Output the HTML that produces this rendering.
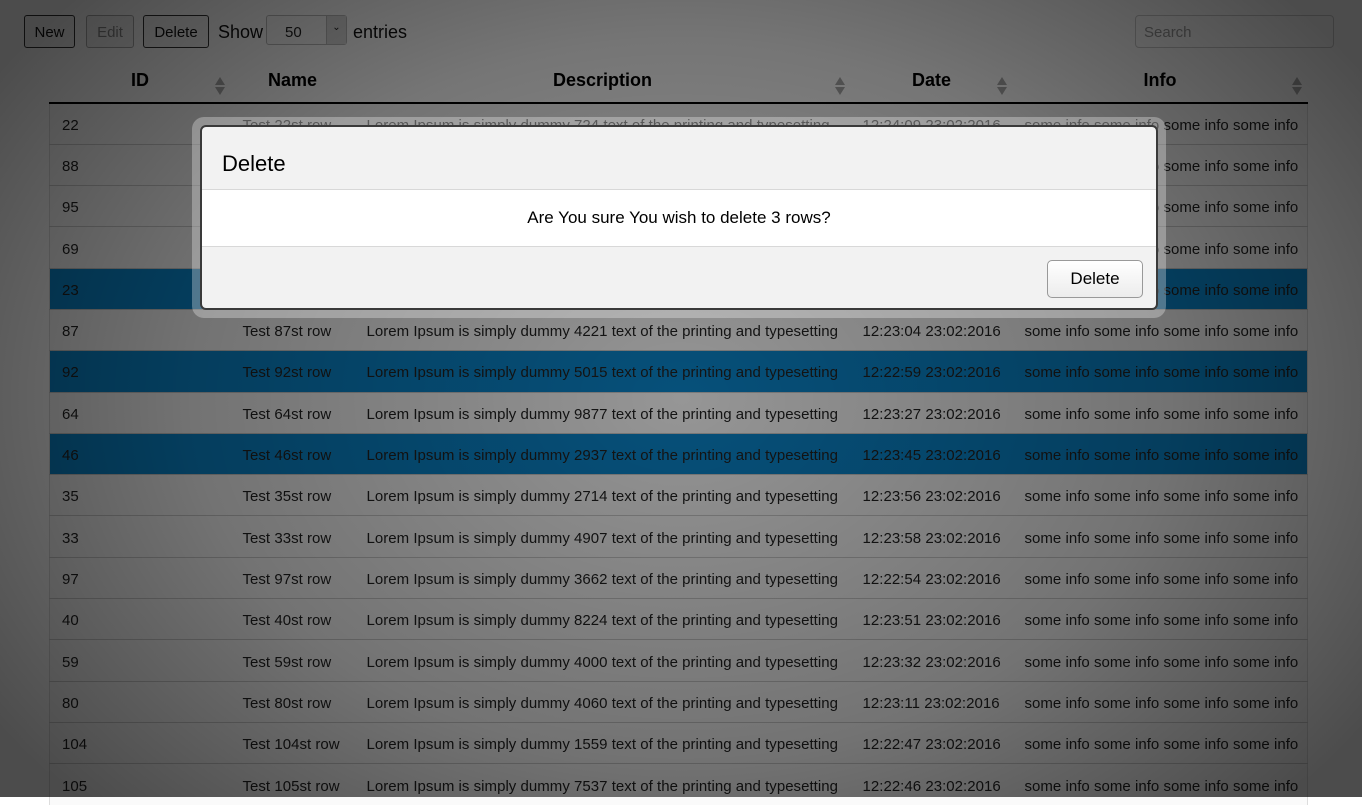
<!DOCTYPE html>
<html><head><meta charset="utf-8"><style>
*{box-sizing:border-box;margin:0;padding:0}
body{width:1362px;height:797px;overflow:hidden;background:#fff;font-family:"Liberation Sans",sans-serif;color:#222;position:relative}
.btn{position:absolute;top:15px;height:33px;border:1px solid #333;border-radius:3px;background:#f4f4f4;font-size:15px;line-height:33px;text-align:center;color:#111}
.lbl{position:absolute;top:22px;font-size:18px;color:#111}
table{position:absolute;left:49px;top:60px;width:1258px;border-collapse:collapse;font-size:15px;table-layout:fixed}
th{height:43px;font-size:18px;font-weight:bold;color:#000;text-align:center;position:relative;border-bottom:2px solid #000;vertical-align:middle;padding-bottom:2px}
th .s{position:absolute;right:6px;top:17px;width:10px;height:19px}
th .s:before{content:"";position:absolute;left:0;top:0;border:5px solid transparent;border-bottom:8px solid #aaa;border-top:0}
th .s:after{content:"";position:absolute;left:0;top:10px;border:5px solid transparent;border-top:8px solid #aaa;border-bottom:0}
td{height:41.3px;padding:3px 0 0 12px;border-top:1px solid #ccc;white-space:nowrap;overflow:visible;color:#222;letter-spacing:.03px}
tbody tr{background:#fafafa}
tbody tr.sel{background:#0a86cc}
table tbody{border-left:1px solid #ddd;border-right:1px solid #ddd}
.ov{position:absolute;left:0;top:0;width:1362px;height:797px;background:radial-gradient(ellipse 60% 75% at 50% 50%,rgba(0,0,0,.4),rgba(0,0,0,.54) 60%,rgba(0,0,0,.7))}
.glow{position:absolute;left:192px;top:117px;width:974px;height:201px;border-radius:12px;background:rgba(255,255,255,.3)}
.dlg{position:absolute;left:200px;top:125px;width:958px;height:185px;border:2px solid #3a3a3a;border-radius:6px;background:#f2f2f2;overflow:hidden}
.hd{height:63px;border-bottom:1px solid #d8d8d8;font-size:22px;padding:24px 0 0 20px;color:#000}
.bd{height:57px;background:#fff;border-bottom:1px solid #d8d8d8;text-align:center;font-size:17px;padding-top:18px;color:#000}
.db{position:absolute;left:845px;top:133px;width:96px;height:38px;border:1px solid #999;border-radius:5px;background:linear-gradient(#fff,#ececec);font-size:17px;text-align:center;line-height:36px;color:#000}
</style></head><body>
<div class="btn" style="left:24px;width:51px">New</div>
<div class="btn" style="left:86px;width:48px;color:#888;border-color:#aaa">Edit</div>
<div class="btn" style="left:143px;width:66px">Delete</div>
<div class="lbl" style="left:218px">Show</div>
<div style="position:absolute;left:266px;top:15px;width:81px;height:30px;border:1px solid #bbb;border-radius:3px;background:#fafafa;font-size:15px;line-height:34px;padding-left:18px">50<div style="position:absolute;right:0;top:0;width:20px;height:28px;background:#ddd;border-left:1px solid #bbb;font-size:10px;line-height:24px;text-align:center">&#8964;</div></div>
<div class="lbl" style="left:353px">entries</div>
<div style="position:absolute;left:1135px;top:15px;width:199px;height:33px;border:1px solid #ccc;border-radius:4px;background:#fff;font-size:15px;color:#999;padding:8px 0 0 8px">Search</div>
<table>
<colgroup><col style="width:181px"><col style="width:124px"><col style="width:496px"><col style="width:162px"><col style="width:295px"></colgroup>
<thead><tr><th>ID<span class="s"></span></th><th>Name</th><th>Description<span class="s"></span></th><th>Date<span class="s"></span></th><th>Info<span class="s"></span></th></tr></thead>
<tbody>
<tr><td>22</td><td>Test 22st row</td><td>Lorem Ipsum is simply dummy 724 text of the printing and typesetting</td><td>12:24:09 23:02:2016</td><td>some info some info some info some info</td></tr>
<tr><td>88</td><td>Test 88st row</td><td>Lorem Ipsum is simply dummy 3125 text of the printing and typesetting</td><td>12:22:58 23:02:2016</td><td>some info some info some info some info</td></tr>
<tr><td>95</td><td>Test 95st row</td><td>Lorem Ipsum is simply dummy 6412 text of the printing and typesetting</td><td>12:22:55 23:02:2016</td><td>some info some info some info some info</td></tr>
<tr><td>69</td><td>Test 69st row</td><td>Lorem Ipsum is simply dummy 5821 text of the printing and typesetting</td><td>12:23:21 23:02:2016</td><td>some info some info some info some info</td></tr>
<tr class="sel"><td>23</td><td>Test 23st row</td><td>Lorem Ipsum is simply dummy 1843 text of the printing and typesetting</td><td>12:24:08 23:02:2016</td><td>some info some info some info some info</td></tr>
<tr><td>87</td><td>Test 87st row</td><td>Lorem Ipsum is simply dummy 4221 text of the printing and typesetting</td><td>12:23:04 23:02:2016</td><td>some info some info some info some info</td></tr>
<tr class="sel"><td>92</td><td>Test 92st row</td><td>Lorem Ipsum is simply dummy 5015 text of the printing and typesetting</td><td>12:22:59 23:02:2016</td><td>some info some info some info some info</td></tr>
<tr><td>64</td><td>Test 64st row</td><td>Lorem Ipsum is simply dummy 9877 text of the printing and typesetting</td><td>12:23:27 23:02:2016</td><td>some info some info some info some info</td></tr>
<tr class="sel"><td>46</td><td>Test 46st row</td><td>Lorem Ipsum is simply dummy 2937 text of the printing and typesetting</td><td>12:23:45 23:02:2016</td><td>some info some info some info some info</td></tr>
<tr><td>35</td><td>Test 35st row</td><td>Lorem Ipsum is simply dummy 2714 text of the printing and typesetting</td><td>12:23:56 23:02:2016</td><td>some info some info some info some info</td></tr>
<tr><td>33</td><td>Test 33st row</td><td>Lorem Ipsum is simply dummy 4907 text of the printing and typesetting</td><td>12:23:58 23:02:2016</td><td>some info some info some info some info</td></tr>
<tr><td>97</td><td>Test 97st row</td><td>Lorem Ipsum is simply dummy 3662 text of the printing and typesetting</td><td>12:22:54 23:02:2016</td><td>some info some info some info some info</td></tr>
<tr><td>40</td><td>Test 40st row</td><td>Lorem Ipsum is simply dummy 8224 text of the printing and typesetting</td><td>12:23:51 23:02:2016</td><td>some info some info some info some info</td></tr>
<tr><td>59</td><td>Test 59st row</td><td>Lorem Ipsum is simply dummy 4000 text of the printing and typesetting</td><td>12:23:32 23:02:2016</td><td>some info some info some info some info</td></tr>
<tr><td>80</td><td>Test 80st row</td><td>Lorem Ipsum is simply dummy 4060 text of the printing and typesetting</td><td>12:23:11 23:02:2016</td><td>some info some info some info some info</td></tr>
<tr><td>104</td><td>Test 104st row</td><td>Lorem Ipsum is simply dummy 1559 text of the printing and typesetting</td><td>12:22:47 23:02:2016</td><td>some info some info some info some info</td></tr>
<tr><td>105</td><td>Test 105st row</td><td>Lorem Ipsum is simply dummy 7537 text of the printing and typesetting</td><td>12:22:46 23:02:2016</td><td>some info some info some info some info</td></tr>
</tbody></table>
<div class="ov"></div>
<div class="glow"></div>
<div class="dlg">
<div class="hd">Delete</div>
<div class="bd">Are You sure You wish to delete 3 rows?</div>
<div class="db">Delete</div>
</div>
</body></html>
